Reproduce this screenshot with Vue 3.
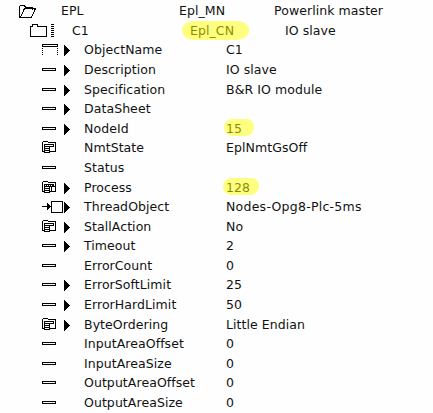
<script setup>
const rows = [
  { h: 20, icon: 'open', name: 'EPL', type: 'Epl_MN', desc: 'Powerlink master', level: 0 },
  { h: 19, icon: 'folder', name: 'C1', type: 'Epl_CN', desc: 'IO slave', level: 1, mark: 'mark-type' },
  { h: 20, icon: 'object', arrow: true, name: 'ObjectName', value: 'C1' },
  { h: 20, icon: 'attr', arrow: true, name: 'Description', value: 'IO slave' },
  { h: 19, icon: 'attr', arrow: true, name: 'Specification', value: 'B&R IO module' },
  { h: 20, icon: 'attr', arrow: true, name: 'DataSheet', value: '' },
  { h: 19, icon: 'attr', arrow: true, name: 'NodeId', value: '15', mark: 'mark-node' },
  { h: 20, icon: 'enum', name: 'NmtState', value: 'EplNmtGsOff' },
  { h: 20, icon: 'attr', name: 'Status', value: '' },
  { h: 19, icon: 'mask', arrow: true, name: 'Process', value: '128', mark: 'mark-process' },
  { h: 20, icon: 'input', arrow: true, name: 'ThreadObject', value: 'Nodes-Opg8-Plc-5ms', wide: true },
  { h: 19, icon: 'enum', arrow: true, name: 'StallAction', value: 'No' },
  { h: 20, icon: 'attr', arrow: true, name: 'Timeout', value: '2' },
  { h: 19, icon: 'attr', name: 'ErrorCount', value: '0' },
  { h: 20, icon: 'attr', arrow: true, name: 'ErrorSoftLimit', value: '25' },
  { h: 20, icon: 'attr', arrow: true, name: 'ErrorHardLimit', value: '50' },
  { h: 19, icon: 'enum', arrow: true, name: 'ByteOrdering', value: 'Little Endian' },
  { h: 20, icon: 'attr', name: 'InputAreaOffset', value: '0' },
  { h: 19, icon: 'attr', name: 'InputAreaSize', value: '0' },
  { h: 20, icon: 'attr', name: 'OutputAreaOffset', value: '0' },
  { h: 19, icon: 'attr', name: 'OutputAreaSize', value: '0' },
]
</script>

<template>
  <main class="tree">
    <div
      v-for="(r, i) in rows"
      :key="i"
      class="row"
      :class="r.level === 0 ? 'root' : r.level === 1 ? 'node' : 'leaf'"
      :style="{ height: r.h + 'px' }"
    >
      <svg class="icon" width="30" height="19" viewBox="0 0 30 19" fill="none" stroke="#000">
        <g v-if="r.icon === 'open'">
          <path d="M1.5 16.5H.5V5.5L1.5 4.5H5.5L6.5 6.5H13.5V8.5M1.5 16.5L5.5 7.5H16.5L12.5 16.5Z" />
        </g>
        <g v-else-if="r.icon === 'folder'">
          <path d="M.5 15.5V5.5H2.5V3.5H7.5V5.5H16.5V15.5Z" />
          <path d="M22.5 3V17" stroke-width="3" stroke-dasharray="1 1" />
        </g>
        <g v-else-if="r.icon === 'object'">
          <path d="M.5 4.5H15.5V6.5H.5Z" />
          <path d="M.5 8V16M15.5 8V16" stroke-dasharray="1 1" />
        </g>
        <path v-else-if="r.icon === 'attr'" d="M.5 8.5H13.5V10.5H.5Z" />
        <g v-else-if="r.icon === 'input'">
          <path d="M0 9.5H6M9.5 4.5H20.5V15.5H9.5Z" />
          <path d="M5 6L9 9.5L5 13Z" fill="#000" stroke="none" />
        </g>
        <g v-else>
          <path d="M2.5 13.5H.5V4.5L1.5 3.5H5.5L6.5 4.5H13.5V13.5H7.5" />
          <path d="M2.5 6.5H11.5V8.5H7.5V14.5H2.5ZM2.5 8.5H7.5M2.5 10.5H7.5M2.5 12.5H7.5" />
          <path v-if="r.icon === 'mask'" d="M4 7.5H5M6 7.5H7M8 7.5H9M10 7.5H11M7.5 8.5H13M9.5 8V13" />
        </g>
        <path v-if="r.arrow" d="M22 5L28 10.5L22 16Z" fill="#000" stroke="none" />
      </svg>
      <span class="name">{{ r.name }}</span>
      <span v-if="r.type" class="type"><i v-if="r.mark" class="mark" :class="r.mark"></i>{{ r.type }}</span>
      <span v-if="r.desc" class="desc">{{ r.desc }}</span>
      <span v-else class="value" :class="{ wide: r.wide }"><i v-if="r.mark" class="mark" :class="r.mark"></i>{{ r.value }}</span>
    </div>
  </main>
</template>

<style>
body {
  background: #fff;
}
</style>

<style scoped>
.tree {
  box-sizing: border-box;
  width: 433px;
  height: 413px;
  padding-top: 1px;
  overflow: hidden;
  background: #fefefe;
  color: #111;
  font: 12.5px/19px "DejaVu Sans", sans-serif;
  letter-spacing: 0.07px;
}
.row {
  display: grid;
  white-space: nowrap;
}
.root {
  grid-template-columns: 42px 118px 95px 1fr;
  padding-left: 19px;
}
.node {
  grid-template-columns: 42px 118px 95px 1fr;
  padding-left: 30px;
}
.leaf {
  grid-template-columns: 42px 142px 1fr;
  padding-left: 42px;
}
.icon {
  display: block;
  shape-rendering: crispEdges;
}
.type,
.value {
  position: relative;
}
.wide {
  letter-spacing: 0.25px;
}
.mark {
  position: absolute;
  background: rgba(255, 255, 0, 0.5);
  z-index: 1;
}
.mark-type {
  left: -8px;
  top: 0;
  width: 67px;
  height: 19px;
  border-radius: 12px 14px 14px 12px / 10px 8px 10px 10px;
}
.mark-node {
  left: -2px;
  top: 0;
  width: 30px;
  height: 17px;
  border-radius: 9px 8px 9px 9px;
}
.mark-process {
  left: -3px;
  top: 0;
  width: 36px;
  height: 17px;
  border-radius: 9px 8px 9px 9px;
}
</style>
